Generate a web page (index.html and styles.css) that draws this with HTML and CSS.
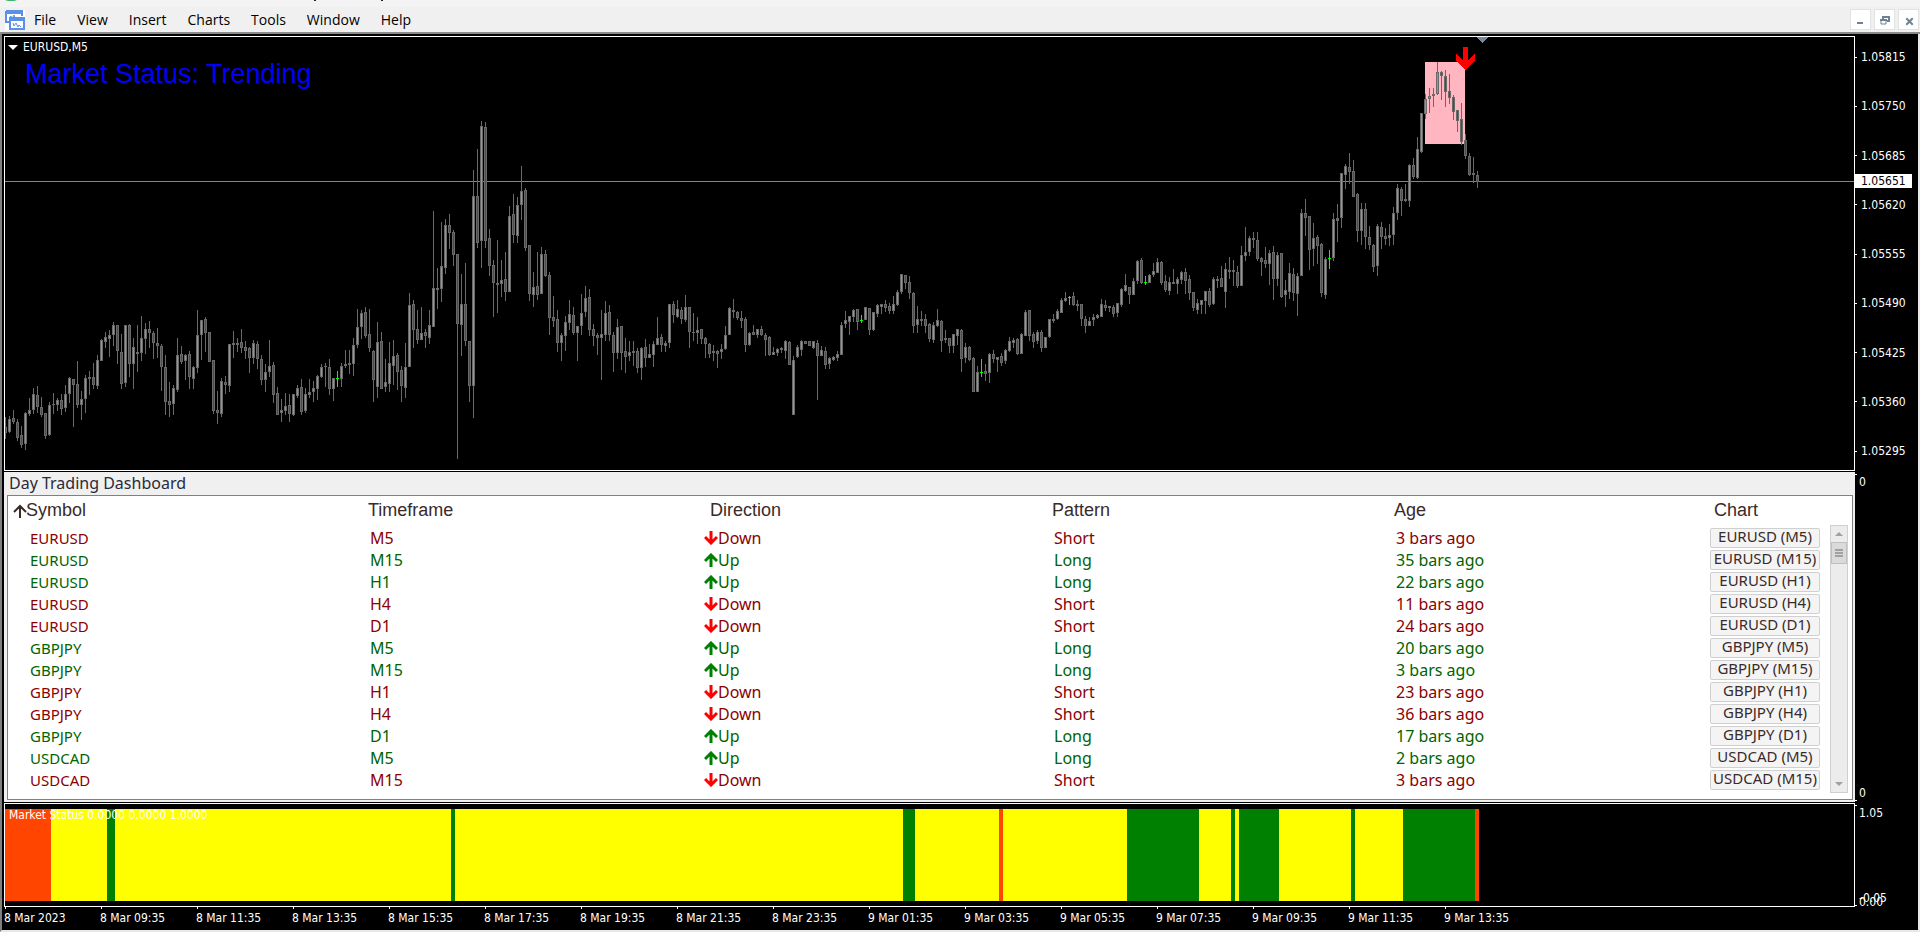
FILE: index.html
```html
<!DOCTYPE html>
<html lang="en">
<head>
    <meta charset="UTF-8">
    <meta name="viewport" content="width=device-width, initial-scale=1.0">
    <title>EURUSD,M5</title>
    <link rel="stylesheet" href="styles.css">
</head>
<body>
    <div class="titlebar">
        <svg width="400" height="7" aria-hidden="true">
            <path d="M5 0h12l-3 1h-6z" fill="#3cb371"/>
            <path d="M314 0h2v1h-2zM381 0h2v1h-2z" fill="#222"/>
        </svg>
    </div>
    <header class="menubar">
        <svg class="app-icon" width="20" height="20" viewBox="0 0 20 20" aria-hidden="true">
            <path d="M1 1h16v5M1 1v11h3M1 3h16" fill="none" stroke="#5b8fe8" stroke-width="2"/>
            <path d="M4 8l2-2 1 3 2-4 1 3h3" fill="none" stroke="#5b8fe8"/>
            <rect x="5" y="8" width="14" height="11" fill="#fff" stroke="#5b8fe8" stroke-width="2"/>
            <path d="M5 10h14" stroke="#5b8fe8" stroke-width="2"/>
            <path d="M8 13l1 3 2-3 2 4 1-2 2 2" fill="none" stroke="#5b8fe8"/>
        </svg>
        <nav class="menu">
            <button type="button">File</button>
            <button type="button">View</button>
            <button type="button">Insert</button>
            <button type="button">Charts</button>
            <button type="button">Tools</button>
            <button type="button">Window</button>
            <button type="button">Help</button>
        </nav>
        <div class="window-buttons">
            <button type="button" aria-label="Minimize"><svg width="19" height="19"><path d="M6 12h6v2h-6z" fill="#6f8193"/></svg></button>
            <button type="button" aria-label="Restore"><svg width="19" height="19"><path d="M8 9V7h6v4h-2M8 7h6" fill="none" stroke="#6f8193" stroke-width="2"/><path d="M6 10h5v4h-5z" fill="#fff" stroke="#6f8193"/><path d="M5 10h7" stroke="#6f8193" stroke-width="2"/></svg></button>
            <button type="button" aria-label="Close"><svg width="19" height="19"><path d="M8 9l5 5M13 9l-5 5" stroke="#6f8193" stroke-width="2" stroke-linecap="square"/></svg></button>
        </div>
    </header>

    <main class="chart-window">
        <section class="plot price-plot">
            <svg id="priceChart" width="100%" height="433" shape-rendering="crispEdges" role="img" aria-label="EURUSD candles"></svg>
            <div class="plot-text">
                <p class="symbol-name"><svg width="10" height="5" aria-hidden="true"><path d="M0 0h10l-5 5z" fill="#fff"/></svg>EURUSD,M5</p>
                <p class="market-status">Market Status: Trending</p>
            </div>
        </section>
        <ul class="axis price-axis">
            <li>1.05815</li>
            <li>1.05750</li>
            <li>1.05685</li>
            <li>1.05620</li>
            <li>1.05555</li>
            <li>1.05490</li>
            <li>1.05425</li>
            <li>1.05360</li>
            <li>1.05295</li>
            <li class="current-price">1.05651</li>
        </ul>

        <section class="dashboard">
            <h2>Day Trading Dashboard</h2>
            <div class="dashboard-box">
                <table>
                    <colgroup>
                        <col><col><col><col>
                        <col class="col-age">
                        <col class="col-chart">
                    </colgroup>
                    <thead>
                        <tr>
                            <th><svg class="sort-icon" width="14" height="14" viewBox="0 0 14 14" aria-hidden="true"><path d="M7 14V2M1 8l6-6 6 6" fill="none" stroke="#3a2a2a" stroke-width="2"/></svg>Symbol</th>
                            <th>Timeframe</th>
                            <th>Direction</th>
                            <th>Pattern</th>
                            <th>Age</th>
                            <th>Chart</th>
                        </tr>
                    </thead>
                    <tbody id="signals"></tbody>
                </table>
                <div class="scrollbar">
                    <button type="button" aria-label="Scroll up"><svg width="8" height="4"><path d="M0 4l4-4 4 4z" fill="#a0a0a0"/></svg></button>
                    <div class="thumb"></div>
                    <button type="button" class="scroll-down" aria-label="Scroll down"><svg width="8" height="4"><path d="M0 0h8l-4 4z" fill="#a0a0a0"/></svg></button>
                </div>
            </div>
        </section>
        <ul class="axis mini-axis">
            <li>0</li>
            <li>0</li>
        </ul>

        <section class="plot status-plot">
            <svg id="statusChart" width="100%" height="102" shape-rendering="crispEdges" role="img" aria-label="Market status"></svg>
            <p class="plot-text status-name">Market Status 0.0000 0.0000 1.0000</p>
        </section>
        <ul class="axis mini-axis">
            <li>1.05</li>
            <li>-0.05</li>
            <li class="zero-level">0.00</li>
        </ul>

        <ul class="time-axis">
            <li>8 Mar 2023</li>
            <li>8 Mar 09:35</li>
            <li>8 Mar 11:35</li>
            <li>8 Mar 13:35</li>
            <li>8 Mar 15:35</li>
            <li>8 Mar 17:35</li>
            <li>8 Mar 19:35</li>
            <li>8 Mar 21:35</li>
            <li>8 Mar 23:35</li>
            <li>9 Mar 01:35</li>
            <li>9 Mar 03:35</li>
            <li>9 Mar 05:35</li>
            <li>9 Mar 07:35</li>
            <li>9 Mar 09:35</li>
            <li>9 Mar 11:35</li>
            <li>9 Mar 13:35</li>
        </ul>
    </main>

    <script src="chart.js"></script>
</body>
</html>
```
FILE: styles.css
```css
* {
    box-sizing: border-box;
}
body {
    margin: 0;
    background-color: #f0f0f0;
    font-family: "Noto Sans", "Open Sans", sans-serif;
}
h2, p, ul {
    margin: 0;
    padding: 0;
}
ul {
    list-style: none;
}
svg {
    display: block;
}
button {
    padding: 0;
    border: none;
    background: none;
    font-family: inherit;
    color: inherit;
}

/* menu */
.titlebar {
    height: 7px;
    background-color: #f3f3f3;
}
.menubar {
    display: flex;
    align-items: center;
    height: 27px;
    padding: 0 1px 0 5px;
    border-bottom: 2px solid #8a8a8a;
}
.app-icon {
    margin-right: 9px;
    background-color: #fff;
}
.menu {
    display: flex;
    gap: 21px;
}
.menu button {
    font-family: "Open Sans", sans-serif;
    font-size: 14px;
    line-height: 20px;
    color: #000;
}
.window-buttons {
    display: flex;
    gap: 3px;
    margin-left: auto;
}
.window-buttons button {
    border: 1px solid #e2e2e2;
    background-color: #fff;
}

/* chart window */
.chart-window {
    display: grid;
    grid-template-columns: 1fr 63px;
    row-gap: 1px;
    padding: 2px 0 0 2px;
    border-left: 2px solid #808080;
    border-right: 2px solid #e8e8e8;
    border-bottom: 2px solid #e8e8e8;
    background-color: #000;
    color: #fff;
    font-family: "DejaVu Sans Condensed", "Noto Sans", sans-serif;
    font-size: 12px;
}
.plot {
    position: relative;
    min-width: 0;
    border: 1px solid #fff;
}
.plot-text {
    position: absolute;
    top: 0;
    left: 3px;
}
.symbol-name {
    display: flex;
    align-items: center;
    gap: 5px;
    line-height: 20px;
}
.market-status {
    padding-left: 17px;
    font-family: "Liberation Sans", Arial, sans-serif;
    font-size: 27px;
    line-height: 34px;
    color: #0000ff;
}
.status-name {
    top: 3px;
    left: 4px;
    line-height: 16px;
}

/* axes */
.axis {
    position: relative;
    display: flex;
    flex-direction: column;
    justify-content: space-between;
}
.price-axis {
    padding: 11px 0 10px;
}
.price-axis li {
    display: flex;
    align-items: center;
    gap: 4px;
    line-height: 20px;
}
.price-axis li::before {
    content: "";
    width: 2px;
    height: 1px;
    background-color: #fff;
}
.price-axis .current-price {
    position: absolute;
    top: 138px;
    left: 0;
    width: 57px;
    line-height: 14px;
    background-color: #fff;
    color: #000;
}
.mini-axis {
    padding: 2px 0 1px 4px;
}
.mini-axis li {
    line-height: 14px;
}
.mini-axis::before,
.mini-axis::after {
    content: "";
    width: 2px;
    height: 1px;
    margin-left: -4px;
    background-color: #fff;
}
.mini-axis li:first-child {
    margin-bottom: auto;
}
.mini-axis .zero-level {
    position: absolute;
    bottom: -2px;
}
.time-axis {
    display: flex;
    grid-column: 1 / -1;
    height: 23px;
    margin-top: -1px;
    overflow: hidden;
}
.time-axis li {
    flex: 0 0 96px;
    line-height: 18px;
    white-space: nowrap;
}
.time-axis li::before {
    content: "";
    display: block;
    width: 1px;
    height: 2px;
    margin-left: 1px;
    background-color: #fff;
}

/* dashboard */
.dashboard {
    min-width: 0;
    padding: 0 2px 2px 3px;
    background-color: #f0f0f0;
    color: #3a2a2a;
    font-family: "Noto Sans", "Open Sans", sans-serif;
    font-size: 16px;
}
.dashboard h2 {
    padding-left: 2px;
    font-size: 16px;
    font-weight: normal;
    line-height: 23px;
    color: #2a2a3a;
}
.dashboard-box {
    display: flex;
    align-items: flex-start;
    padding: 0 4px 8px;
    border: 1px solid #808080;
    background-color: #fff;
}
table {
    width: 100%;
    min-width: 0;
    table-layout: fixed;
    border-collapse: collapse;
}
.col-age {
    width: 320px;
}
.col-chart {
    width: 124px;
}
th {
    position: relative;
    padding: 0 0 3px 14px;
    font-family: "Liberation Sans", Arial, sans-serif;
    font-size: 18px;
    font-weight: normal;
    line-height: 28px;
    text-align: left;
}
.sort-icon {
    position: absolute;
    top: 8px;
    left: 1px;
}
td {
    height: 22px;
    padding: 0 0 0 16px;
    line-height: 22px;
}
td:first-child {
    padding-left: 18px;
    font-size: 15px;
}
td:last-child {
    padding-left: 10px;
}
.long {
    color: #006400;
}
.short {
    color: #8b0000;
}
.direction {
    display: flex;
    align-items: center;
    padding-left: 8px;
}
.open-chart {
    display: block;
    width: 110px;
    height: 20px;
    padding-bottom: 3px;
    border: 1px solid #d0d0d0;
    border-radius: 2px;
    background-color: #f4f4f4;
    font-size: 15px;
    line-height: 15px;
    white-space: nowrap;
    color: #3a2a2a;
}
.scrollbar {
    display: flex;
    flex-direction: column;
    flex: 0 0 18px;
    align-items: center;
    align-self: stretch;
    margin: 29px 0 -2px 6px;
    border: 1px solid #d0d0d0;
    background-color: #ececec;
}
.scrollbar button {
    display: flex;
    align-items: center;
    height: 16px;
}
.scrollbar .scroll-down {
    margin-top: auto;
}
.thumb {
    width: 16px;
    height: 22px;
    padding: 6px 3px;
    border: 1px solid #c0c0c0;
    background-color: #dadada;
}
.thumb::before {
    content: "";
    display: block;
    height: 8px;
    background: repeating-linear-gradient(#a0a0a0 0 2px, #dadada 2px 3px);
}
```
FILE: chart.js
```js
const SVG_NS = "http://www.w3.org/2000/svg";
const STEP = 4;
const TOP = 37;

// high, body top, body bottom, low, type (g up, r down, n flat, x doji)
const candles = `
417 427 433 439 r,416 419 432 433 g,410 418 422 424 r,419 422 438 441 r,426 435 445 448 r,412 413 444 450 g
398 410 414 416 g,388 394 410 414 g,386 395 407 413 r,397 407 415 417 r,413 413 436 439 r,402 405 435 436 g
393 404 405 414 n,398 400 405 411 g,394 400 409 415 r,385 394 408 412 g,377 378 394 403 g,379 379 385 427 r
361 384 405 408 r,391 399 405 420 g,375 378 399 413 g,371 377 379 395 n,363 377 385 389 r,355 360 386 389 g
339 340 361 361 g,332 337 342 348 g,330 335 339 357 g,322 325 335 346 g,325 325 351 364 r,334 352 384 389 r
325 325 383 387 g,324 325 364 377 r,338 347 364 389 g,325 352 354 372 n,316 338 353 361 g,323 329 339 354 g
321 329 333 348 r,331 333 343 359 r,328 343 346 358 r,344 346 367 391 r,355 367 402 415 r,382 401 405 417 r
385 388 404 415 g,338 355 390 392 g,346 354 362 364 r,354 355 361 380 g,351 354 377 389 r,366 367 379 389 g
310 335 368 373 g,320 320 335 360 g,317 319 333 352 r,332 332 362 362 r,360 360 411 414 r,391 410 413 424 r
378 381 414 417 g,376 382 385 394 r,344 344 386 392 g,331 343 345 358 n,338 343 345 352 n,329 342 348 353 r
341 347 351 359 r,347 348 358 373 r,340 343 358 364 g,341 344 359 369 r,355 359 380 385 r,364 372 380 392 g
340 366 372 377 g,362 365 395 403 r,387 393 415 415 r,399 410 413 422 g,393 406 411 415 g,394 405 414 422 r
394 394 415 416 g,385 388 396 398 g,379 387 412 415 r,388 394 411 413 g,379 392 395 398 g,381 388 392 402 g
375 376 389 400 g,364 367 377 378 g,363 366 367 387 n,359 367 389 395 r,378 378 389 401 g,371 378 379 387 x
363 366 379 387 g,350 364 366 368 n,350 363 365 374 n,338 345 364 376 g,309 327 345 348 g,310 313 327 339 g
307 312 336 338 r,309 334 348 352 r,350 351 380 402 r,322 342 387 398 g,332 341 389 389 r,359 382 387 392 g
342 363 384 392 g,340 356 366 385 g,353 355 372 390 r,366 370 386 402 r,343 367 388 398 g,293 305 367 367 g
300 304 330 348 r,310 329 340 344 r,307 333 340 340 g,329 332 336 348 r,310 325 338 344 g,211 288 327 327 g
268 288 290 309 n,222 266 289 302 g,219 225 268 274 g,214 225 233 249 r,230 232 255 266 r,254 254 324 459 r
274 304 325 356 g,263 304 341 346 r,341 341 386 402 r,170 196 386 418 g,149 196 243 248 r,121 126 241 268 g
122 127 241 248 r,229 238 266 276 r,260 265 283 317 r,240 283 285 313 n,260 280 284 297 g,252 279 292 301 r
206 216 292 292 g,194 214 235 243 r,197 205 236 243 g,166 191 205 220 g,188 190 248 251 r,245 245 294 301 r
272 287 295 307 g,252 286 295 300 r,247 254 294 294 g,250 254 276 277 r,272 275 318 335 r,296 317 321 327 r
310 319 343 352 r,333 335 343 361 g,316 322 336 351 g,300 314 323 330 g,307 315 333 335 r,326 326 333 361 g
294 313 326 335 g,286 298 312 317 g,289 297 330 336 r,324 329 336 346 r,333 335 338 355 r,310 334 338 380 g
301 313 335 341 g,305 312 335 341 r,332 335 353 372 r,319 327 353 359 g,326 326 353 370 r,338 351 357 373 r
341 352 356 361 g,341 351 353 366 n,348 351 368 373 r,347 348 368 380 g,339 347 358 367 r,344 354 358 358 g
341 344 355 367 g,317 338 345 345 g,334 337 345 352 r,341 343 346 352 g,304 304 343 348 g,301 304 315 323 r
300 309 317 318 g,307 310 319 324 r,295 307 320 322 g,307 307 332 348 r,313 332 333 341 n,317 330 333 344 g
329 329 339 344 r,337 338 344 358 r,343 344 354 358 r,345 351 353 361 n,350 351 354 368 r,344 349 352 359 g
326 335 349 350 g,307 308 335 335 g,299 310 312 318 n,311 312 318 320 r,311 318 321 328 r,317 319 345 352 r
332 333 345 346 g,325 332 335 335 r,329 329 335 338 g,326 329 335 336 r,333 335 340 356 r,336 337 355 356 r
347 352 355 355 g,348 349 353 356 g,347 348 350 353 n,340 341 351 359 g,341 342 365 365 r,356 360 415 415 g
345 347 357 358 g,340 341 350 356 g,341 341 344 344 r,341 341 346 346 r,341 341 348 349 g,340 343 356 400 r
346 350 356 356 g,347 351 365 369 r,357 358 364 369 g,356 357 360 361 g,351 354 358 361 g,322 325 355 355 g
311 320 324 328 g,316 316 322 335 g,309 310 317 322 g,309 309 322 330 r,315 320 321 323 x,307 307 320 320 g
308 308 330 335 r,312 312 330 331 g,304 305 314 317 g,304 304 307 314 g,300 304 308 312 r,303 306 311 314 r
296 304 311 314 g,290 292 305 306 g,274 274 292 294 g,275 275 283 289 r,276 282 293 299 r,292 293 326 333 r
306 319 325 333 g,311 319 321 326 n,314 319 326 333 r,323 324 339 342 r,322 325 340 343 g,309 320 326 327 g
320 321 341 352 r,330 338 340 343 n,338 338 346 353 r,334 334 346 353 g,329 329 336 345 g,329 330 359 372 r
343 347 358 363 g,346 347 360 361 r,357 358 392 392 r,366 372 392 392 g,359 372 373 377 x,364 371 374 381 r
353 354 373 383 g,350 354 359 363 r,357 357 360 372 g,353 356 363 366 r,349 350 361 364 g,337 341 351 352 g
338 340 343 348 g,338 339 354 355 r,333 334 354 354 g,310 312 336 336 g,310 310 336 341 r,332 334 342 348 r
330 332 341 344 g,330 332 348 352 r,337 337 348 348 g,319 319 337 338 g,314 319 321 323 n,309 311 319 320 g
298 300 313 313 g,292 298 301 302 g,296 297 298 305 x,292 296 305 306 r,300 304 306 311 n,304 304 319 326 r
316 319 326 333 r,317 321 326 326 g,314 317 320 326 g,314 315 318 319 g,299 304 317 317 g,300 305 308 311 r
306 306 308 312 n,305 307 314 317 r,303 303 313 317 g,288 289 305 307 g,274 285 291 292 g,287 287 295 304 r
278 281 295 295 g,260 261 281 284 g,258 260 283 284 r,276 282 283 285 x,274 275 283 283 g,263 271 275 277 g
258 262 273 273 g,261 262 283 285 r,275 281 290 292 r,277 282 291 295 g,269 282 284 284 n,277 279 284 294 g
271 272 280 284 g,268 272 281 294 r,275 279 293 300 r,292 292 308 311 r,299 303 310 314 g,300 300 305 314 g
291 291 301 314 g,288 291 305 307 r,277 279 304 305 g,276 279 281 288 n,266 278 287 287 r,263 269 292 308 g
257 270 272 279 n,260 270 272 286 n,266 272 286 288 r,246 255 286 286 g,227 252 256 261 g,236 238 252 256 g
232 238 240 248 n,232 240 259 261 r,257 258 262 276 r,247 260 264 268 r,250 253 264 285 g,246 252 279 300 r
252 255 279 286 g,253 253 297 298 r,280 290 295 307 g,263 273 292 299 g,268 274 293 301 r,273 276 294 316 g
209 213 276 276 g,199 213 218 236 r,216 216 250 270 r,223 238 249 266 g,235 237 246 264 r,243 244 293 297 r
257 259 295 299 g,250 258 259 269 x,213 219 258 261 g,204 218 221 242 n,173 173 218 228 g,164 166 175 189 g
153 167 172 184 r,160 171 197 197 r,193 194 231 242 r,203 209 231 245 g,203 209 237 249 r,226 237 245 250 r
244 245 267 272 r,224 226 266 276 g,222 227 237 249 r,228 236 239 245 r,224 235 238 246 g,207 213 235 245 g
184 188 213 220 g,187 189 201 216 r,184 199 201 202 n,164 165 201 207 g,158 165 177 179 r,137 149 178 179 g
113 113 152 153 g,94 99 114 119 g,88 96 99 113 g,88 94 96 107 n,62 72 94 95 g,71 72 76 100 r
70 76 92 107 r,74 91 98 104 r,95 97 112 120 r,110 110 121 132 r,103 119 142 145 r,134 140 156 159 r
153 156 175 176 r,157 173 175 183 n,171 175 182 188 r`;

// first bar, last bar (exclusive), status
const statusRanges = [
    [0, 370, "range"],
    [0, 12, "weak"],
    [26, 28, "trend"],
    [112, 113, "trend"],
    [225, 228, "trend"],
    [249, 250, "weak"],
    [281, 299, "trend"],
    [307, 308, "trend"],
    [309, 319, "trend"],
    [337, 338, "trend"],
    [350, 368, "trend"],
    [368, 369, "weak"]
];
const statusColors = { range: "#ffff00", trend: "#008000", weak: "#ff4500" };

const signals = [
    ["EURUSD", "M5", "Down", 3],
    ["EURUSD", "M15", "Up", 35],
    ["EURUSD", "H1", "Up", 22],
    ["EURUSD", "H4", "Down", 11],
    ["EURUSD", "D1", "Down", 24],
    ["GBPJPY", "M5", "Up", 20],
    ["GBPJPY", "M15", "Up", 3],
    ["GBPJPY", "H1", "Down", 23],
    ["GBPJPY", "H4", "Down", 36],
    ["GBPJPY", "D1", "Up", 17],
    ["USDCAD", "M5", "Up", 2],
    ["USDCAD", "M15", "Down", 3]
];

function add(parent, name, attrs) {
    const el = document.createElementNS(SVG_NS, name);
    for (const key in attrs) {
        el.setAttribute(key, attrs[key]);
    }
    parent.appendChild(el);
}

function rect(parent, x, y, width, height, fill) {
    add(parent, "rect", { x, y, width, height, fill });
}

function drawPrice() {
    const svg = document.getElementById("priceChart");
    rect(svg, 1420, 62 - TOP, 40, 82, "#ffb6c1");
    rect(svg, 0, 181 - TOP, "100%", 1, "#778899");

    candles.trim().split(/[,\n]/).forEach((row, i) => {
        const parts = row.split(" ");
        const [high, top, bottom, low] = parts.slice(0, 4).map(v => Number(v) - TOP);
        const type = parts[4];
        const x = i * STEP;
        const line = type === "x" ? "#00ff00" : "#696969";

        rect(svg, x, high, 1, low - high, line);
        rect(svg, x - 1, top, 3, Math.max(bottom - top, 1), line);
        if (type === "g" || type === "r") {
            rect(svg, x, top + 1, 1, Math.max(bottom - top - 2, 1), type === "g" ? "#00ff00" : "#ff0000");
        }
    });

    // sell arrow and chart shift marker
    add(svg, "path", { d: "M1458 10h5v13l7-6v7l-9.5 9-9.5-9v-7l7 6z", fill: "#ff0000" });
    add(svg, "path", { d: "M1472 0h11l-5.5 6z", fill: "#778899" });
}

function drawStatus() {
    const svg = document.getElementById("statusChart");
    statusRanges.forEach(([from, to, status]) => {
        const start = from === 0 ? 0 : from * STEP - 2;
        const end = Math.min(to, 369) * STEP - 2;
        rect(svg, start, 5, end - start, 92, statusColors[status]);
    });
}

function fillSignals() {
    const arrows = {
        Up: '<svg width="14" height="14" viewBox="0 0 14 14"><path d="M7 14V3M1 8l6-6 6 6" fill="none" stroke="#008000" stroke-width="3"/></svg>',
        Down: '<svg width="14" height="14" viewBox="0 0 14 14"><path d="M7 0v11M1 6l6 6 6-6" fill="none" stroke="#ff0000" stroke-width="3"/></svg>'
    };
    document.getElementById("signals").innerHTML = signals.map(([symbol, timeframe, direction, age]) => {
        const pattern = direction === "Up" ? "Long" : "Short";
        return `<tr class="${pattern.toLowerCase()}">
            <td>${symbol}</td>
            <td>${timeframe}</td>
            <td class="direction">${arrows[direction]}${direction}</td>
            <td>${pattern}</td>
            <td>${age} bars ago</td>
            <td><button type="button" class="open-chart">${symbol} (${timeframe})</button></td>
        </tr>`;
    }).join("");
}

drawPrice();
drawStatus();
fillSignals();
```
